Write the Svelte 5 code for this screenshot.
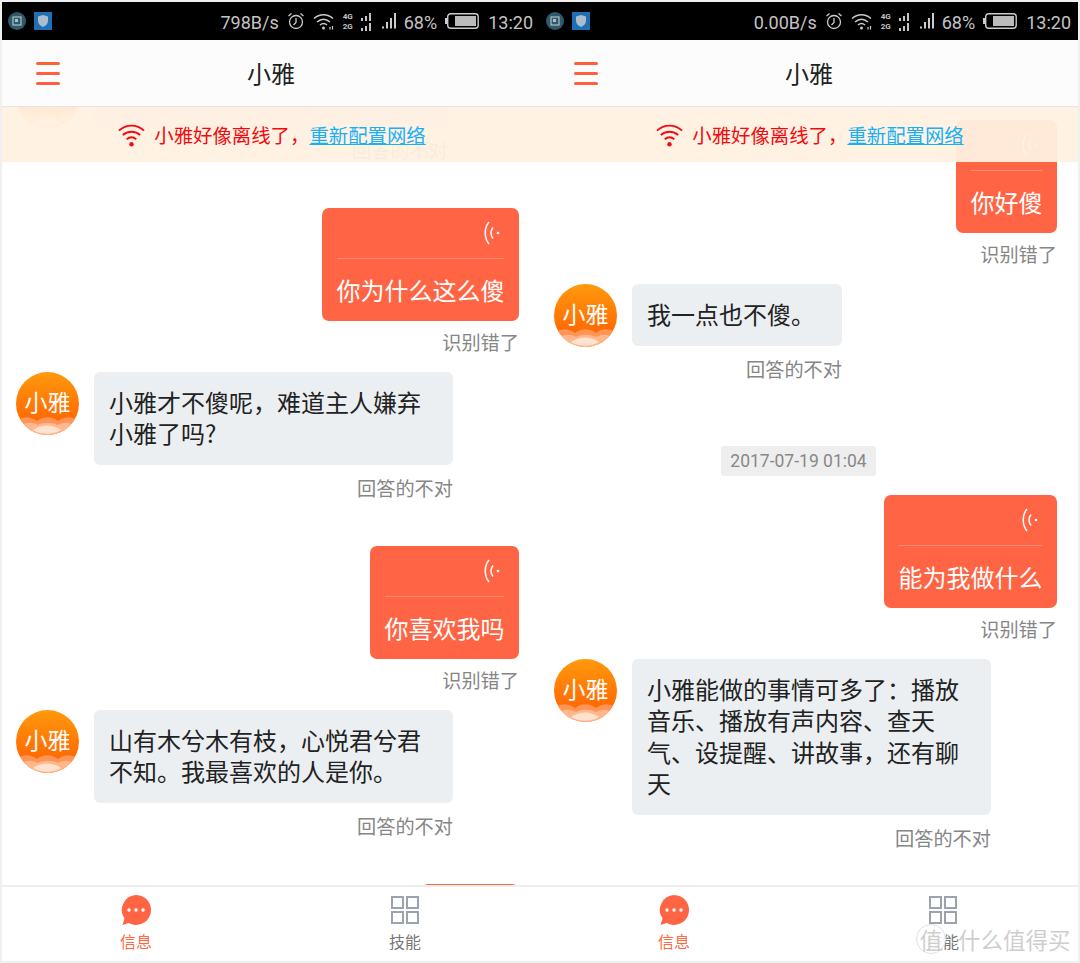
<script>
  const phones = [
    {
      speed: "798B/s",
      scroll: "left",
      items: [
        { from: "bot", text: "\u00a0", note: "回答的不对", size: "w354" },
        { from: "me", text: "你为什么这么傻", note: "识别错了" },
        { from: "bot", text: "小雅才不傻呢，难道主人嫌弃小雅了吗?", note: "回答的不对" },
        { from: "me", text: "你喜欢我吗", note: "识别错了" },
        { from: "bot", text: "山有木兮木有枝，心悦君兮君不知。我最喜欢的人是你。", note: "回答的不对" },
        { from: "me", text: "\u00a0", note: "识别错了", size: "w98" },
      ],
    },
    {
      speed: "0.00B/s",
      scroll: "right",
      items: [
        { from: "me", text: "你好傻", note: "识别错了" },
        { from: "bot", text: "我一点也不傻。", note: "回答的不对", size: "w210" },
        { time: "2017-07-19 01:04" },
        { from: "me", text: "能为我做什么", note: "识别错了" },
        { from: "bot", text: "小雅能做的事情可多了：播放音乐、播放有声内容、查天气、设提醒、讲故事，还有聊天", note: "回答的不对" },
      ],
    },
  ];
</script>

{#snippet statusbar(speed)}
  <div class="status">
    <span class="app-dot">
      <svg width="10" height="10" viewBox="0 0 10 10"><rect x="1" y="1" width="8" height="8" fill="none" stroke="#a9c0c8" stroke-width="1.2" /><rect x="3" y="3" width="3" height="3" fill="#a9c0c8" /></svg>
    </span>
    <span class="app-shield">
      <svg width="10" height="12" viewBox="0 0 10 12"><path d="M0 1.500 5 0l5 1.500V6c0 3-2.500 5-5 6-2.500-1-5-3-5-6z" fill="#a8bdd0" /></svg>
    </span>
    <span class="spacer"></span>
    <span class="speed">{speed}</span>
    <svg class="alarm" width="18" height="18" viewBox="0 0 18 18" fill="none" stroke="#ccc" stroke-width="1.300">
      <circle cx="9" cy="10" r="6.500" />
      <path d="M9 6v4.500L6.500 13M1.500 4 4.500 1.500M16.500 4l-3-2.500" />
    </svg>
    <svg class="wifi" width="22" height="17" viewBox="0 0 22 17" fill="none" stroke="#ccc" stroke-width="1.500">
      <path d="M1 5.500C6.500 .5 14.500 .5 20 5.500M4 9c4-3.500 9-3.500 13 0M7 12c2.500-2 4.500-2 7 0" />
      <circle cx="10.500" cy="15" r="1.500" fill="#ccc" stroke="none" />
      <path d="M17 14v2.500M19.500 13v3.500" stroke-width="1.200" />
    </svg>
    <span class="net">
      <span class="net-row"><b>4G</b><i class="bars"><u></u><u></u><u></u></i></span>
      <span class="net-row"><b>2G</b><i class="bars"><u></u><u></u><u></u></i></span>
    </span>
    <svg class="signal" width="14" height="16" viewBox="0 0 14 16" fill="#ccc">
      <rect x="0" y="13.500" width="2" height="2" /><rect x="4" y="9" width="2" height="6.500" /><rect x="8" y="5" width="2" height="10.500" /><rect x="12" y="0" width="2" height="15.500" />
    </svg>
    <span class="pct">68%</span>
    <svg class="battery" width="34" height="16" viewBox="0 0 34 16">
      <rect x="0" y="5" width="2" height="6" fill="#ccc" />
      <rect x="2.700" y=".7" width="30.500" height="14.500" rx="3" fill="none" stroke="#ccc" stroke-width="1.400" />
      <rect x="10" y="3" width="21" height="10" fill="#bbb" />
    </svg>
    <span class="clock">13:20</span>
  </div>
{/snippet}

{#snippet avatar()}
  <div class="avatar">
    <span>小雅</span>
    <svg class="waves" width="63" height="20" viewBox="0 0 63 20">
      <path d="M0 7C6 1 14 1 21 6c6-5 15-5 21 0 7-5 15-5 21 1v13H0z" fill="#ff9c66" opacity=".85" />
      <path d="M4 11c6-4 12-4 18-1 6-3 14-3 20 0 6-3 11-3 17 1v9H4z" fill="#ffbd94" opacity=".85" />
      <path d="M17 15c8-6 20-6 28 0-8 5-20 5-28 0z" fill="#ffe3d0" />
    </svg>
  </div>
{/snippet}

{#snippet voice()}
  <svg width="16" height="24" viewBox="0 0 16 24" fill="none" stroke="#fff" stroke-width="1.500">
    <path d="M5 1C0 7 0 17 5 23M9 6.500c-2.500 3.500-2.500 7.500 0 11" />
    <circle cx="14" cy="12" r="1.300" fill="#fff" stroke="none" />
  </svg>
{/snippet}

{#snippet phone(p)}
  <section class="phone">
    {@render statusbar(p.speed)}
    <header class="topbar">
      <div class="menu"><i></i><i></i><i></i></div>
      <div class="title">小雅</div>
    </header>

    <div class="chat">
      <div class="list {p.scroll}">
        {#each p.items as m}
          {#if m.time}
            <div class="time">{m.time}</div>
          {:else if m.from === "me"}
            <div class="msg me">
              <div class="bubble-me {m.size}">
                <div class="voice">{@render voice()}</div>
                <div class="said">{m.text}</div>
              </div>
              <div class="note">{m.note}</div>
            </div>
          {:else}
            <div class="msg bot">
              {@render avatar()}
              <div class="col">
                <div class="bubble-bot {m.size}">{m.text}</div>
                <div class="note">{m.note}</div>
              </div>
            </div>
          {/if}
        {/each}
      </div>

      <div class="banner">
        <svg width="27" height="24" viewBox="0 0 28 24" fill="none" stroke="#f5090f" stroke-width="2">
          <path d="M1 7.500c7.500-7 18.500-7 26 0M5 12c5-4.500 13-4.500 18 0M9 16.500c3-2.500 7-2.500 10 0" />
          <circle cx="14" cy="21.500" r="2.300" fill="#f5090f" stroke="none" />
        </svg>
        <span class="offline">小雅好像离线了，<span class="link">重新配置网络</span></span>
      </div>
    </div>

    <nav class="tabs">
      <div class="tab active">
        <svg width="32" height="32" viewBox="0 0 32 32">
          <path d="M16 1a15 15 0 1 1-7.500 28L2.500 31 4.500 24.500A15 15 0 0 1 16 1z" fill="#ff6544" />
          <circle cx="9" cy="16" r="1.700" fill="#fff" /><circle cx="16" cy="16" r="1.700" fill="#fff" /><circle cx="23" cy="16" r="1.700" fill="#fff" />
        </svg>
        <span>信息</span>
      </div>
      <div class="tab">
        <svg width="32" height="32" viewBox="0 0 32 32" fill="none" stroke="#9aa3ae" stroke-width="2">
          <rect x="3" y="3" width="11" height="11" /><rect x="18" y="3" width="11" height="11" /><rect x="3" y="18" width="11" height="11" /><rect x="18" y="18" width="11" height="11" />
        </svg>
        <span>技能</span>
      </div>
    </nav>
  </section>
{/snippet}

<main class="page">
  {#each phones as p}
    {@render phone(p)}
  {/each}
  <div class="watermark">
    <span class="seal">值</span>
    <span>什么值得买</span>
  </div>
</main>

<style>
  :global(body) {
    margin: 0;
  }
  .page {
    position: relative;
    display: flex;
    width: 1080px;
    height: 963px;
    box-sizing: border-box;
    padding: 2px;
    background: #f0f0f0;
    overflow: hidden;
    font-family: "Noto Sans CJK SC", "Noto Sans", sans-serif;
  }
  .phone {
    width: 538px;
    height: 959px;
    display: flex;
    flex-direction: column;
    background: #fff;
  }

  /* status bar */
  .status {
    height: 38px;
    flex: none;
    display: flex;
    align-items: center;
    padding: 0 7px 0 6px;
    background: #000;
    color: #c4c4c4;
    font-family: Roboto, sans-serif;
    font-size: 18px;
  }
  .app-dot {
    width: 18px;
    height: 18px;
    border-radius: 50%;
    background: #2f5a6b;
    display: flex;
    align-items: center;
    justify-content: center;
    margin-right: 8px;
  }
  .app-shield {
    width: 18px;
    height: 18px;
    background: #1f6fb5;
    display: flex;
    align-items: center;
    justify-content: center;
  }
  .spacer {
    flex: 1;
  }
  .speed,
  .pct,
  .clock {
    padding-top: 3px;
  }
  .alarm {
    margin-left: 8px;
  }
  .wifi {
    margin-left: 8px;
  }
  .net {
    margin-left: 8px;
    width: 28px;
    display: flex;
    flex-direction: column;
    gap: 1px;
  }
  .net-row {
    display: flex;
    align-items: flex-end;
    justify-content: space-between;
    height: 9px;
  }
  .net-row b {
    font-size: 8px;
    line-height: 9px;
    font-weight: 700;
  }
  .bars {
    display: flex;
    align-items: flex-end;
    gap: 2px;
  }
  .bars u {
    display: block;
    width: 2px;
    height: 3px;
    background: #c4c4c4;
  }
  .bars u:nth-child(2) {
    height: 5px;
  }
  .bars u:nth-child(3) {
    height: 8px;
  }
  .signal {
    margin-left: 11px;
  }
  .pct {
    margin-left: 8px;
  }
  .battery {
    margin-left: 8px;
  }
  .clock {
    margin-left: 9px;
  }

  /* header */
  .topbar {
    height: 67px;
    flex: none;
    box-sizing: border-box;
    display: grid;
    grid-template-columns: 1fr auto 1fr;
    align-items: center;
    background: #fcfcfc;
    border-bottom: 1px solid #e4e4e4;
  }
  .menu {
    display: flex;
    flex-direction: column;
    gap: 7px;
    width: 24px;
    margin-left: 34px;
  }
  .menu i {
    display: block;
    height: 3px;
    border-radius: 2px;
    background: #ff5f3c;
  }
  .title {
    font-size: 24px;
    color: #222;
    padding-bottom: 2px;
  }

  /* chat */
  .chat {
    position: relative;
    flex: 1;
    overflow: hidden;
  }
  .list {
    display: flex;
    flex-direction: column;
    padding: 0 21px 0 14px;
  }
  .list.left {
    margin-top: -42px;
  }
  .list.right {
    margin-top: 13px;
  }
  .msg {
    display: flex;
  }
  .msg.me {
    flex-direction: column;
    align-items: flex-end;
    margin-bottom: 19px;
  }
  .msg.bot {
    gap: 15px;
    margin-bottom: 47px;
  }
  .col {
    display: flex;
    flex-direction: column;
    align-items: flex-end;
  }
  .avatar {
    position: relative;
    width: 63px;
    height: 63px;
    flex: none;
    border-radius: 50%;
    overflow: hidden;
    background: linear-gradient(#ff9a0c, #ff5a00);
    color: #fff;
    font-size: 23px;
    line-height: 59px;
    text-align: center;
  }
  .avatar span {
    position: relative;
    z-index: 1;
  }
  .waves {
    position: absolute;
    left: 0;
    bottom: 0;
  }
  .bubble-bot {
    max-width: 329px;
    padding: 14px 15px 16px;
    width: fit-content;
    border-radius: 6px;
    background: #eceff2;
    color: #222;
    font-size: 24px;
    line-height: 31.5px;
  }
  .bubble-bot.w210 {
    width: 180px;
  }
  .bubble-bot.w354 {
    width: 324px;
  }
  .bubble-me {
    border-radius: 7px;
    background: #ff6544;
    color: #fff;
    font-size: 24px;
  }
  .bubble-me.w98 {
    width: 98px;
  }
  .voice {
    height: 50px;
    margin: 0 15px;
    padding-right: 4px;
    border-bottom: 1px solid rgba(255, 255, 255, 0.25);
    display: flex;
    align-items: center;
    justify-content: flex-end;
  }
  .said {
    height: 62px;
    line-height: 62px;
    padding: 0 14.5px;
    white-space: nowrap;
  }
  .note {
    margin-top: 11px;
    font-size: 19.2px;
    line-height: 20px;
    margin-bottom: 1px;
    color: #868686;
  }
  .col .note {
    margin-top: 13px;
  }
  .time {
    align-self: center;
    margin: 19px 14px 19px 0;
    padding: 0 9px;
    height: 30px;
    line-height: 30px;
    border-radius: 3px;
    background: #eee;
    color: #888;
    font-family: Roboto, sans-serif;
    font-size: 17.500px;
  }

  /* offline banner lies over the chat */
  .banner {
    position: absolute;
    top: 0;
    left: 0;
    right: 0;
    height: 55px;
    box-sizing: border-box;
    padding-left: 2px;
    display: flex;
    align-items: center;
    justify-content: center;
    gap: 9px;
    background: rgba(255, 241, 225, 0.94);
  }
  .offline {
    color: #f5090f;
    font-size: 19.4px;
  }
  .link {
    color: #19b0f6;
    text-decoration: underline;
  }

  /* tabs */
  .tabs {
    height: 76px;
    flex: none;
    box-sizing: border-box;
    display: grid;
    grid-template-columns: 1fr 1fr;
    position: relative;
    background: #fff;
    border-top: 2px solid #eee;
  }
  .tab {
    display: flex;
    flex-direction: column;
    align-items: center;
    padding: 7px 1px 0 0;
    color: #777;
    font-size: 16px;
    line-height: 22px;
  }
  .tab.active {
    color: #ff6a45;
  }
  .tab span {
    margin-top: 4px;
  }

  /* site watermark on the photo */
  .watermark {
    position: absolute;
    left: 916px;
    top: 924px;
    display: flex;
    align-items: center;
    gap: 12px;
    color: rgba(190, 190, 190, 0.75);
    font-size: 22.500px;
    line-height: 30px;
    text-shadow: 0 0 2px #fff;
  }
  .seal {
    width: 28px;
    height: 28px;
    line-height: 28px;
    border-radius: 50%;
    text-align: center;
    background: rgba(255, 255, 255, 0.85);
    border: 1px solid #e2e2e2;
  }
</style>
